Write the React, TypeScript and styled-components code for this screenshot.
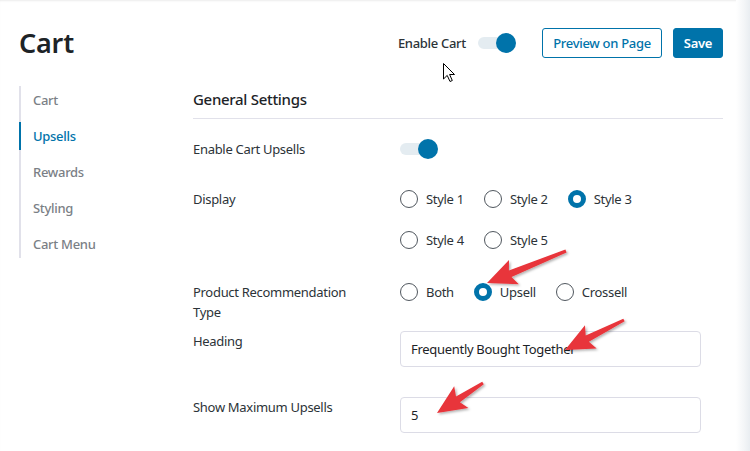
import React from "react";
import styled, { createGlobalStyle } from "styled-components";

const GlobalStyle = createGlobalStyle`
  html, body { margin: 0; padding: 0; background: #ffffff; }
  body { font-family: "Noto Sans", "Open Sans", sans-serif; color: #1d2327; letter-spacing: -0.3px; }
  * { box-sizing: border-box; }
`;

const Page = styled.div`
  position: relative;
  width: 750px;
  height: 451px;
  display: flex;
  overflow: hidden;
  background: #fff;
  box-shadow: inset 0 2px 2px -1px rgba(0, 0, 0, 0.08);
`;

const Content = styled.div`
  flex: 1;
  padding: 28px 13px 0 19px;
  display: flex;
  flex-direction: column;
`;

const EdgeStrip = styled.div`
  width: 14px;
  background: linear-gradient(90deg, #ffffff 0%, #f3f5f7 60%, #e9edf1 100%);
`;

const Header = styled.div`
  display: flex;
  align-items: center;
  justify-content: space-between;
  height: 30px;
`;

const Title = styled.h1`
  margin: 0;
  font-size: 27px;
  font-weight: 600;
  line-height: 30px;
  letter-spacing: -0.2px;
  color: #1d2327;
`;

const Actions = styled.div`
  display: flex;
  align-items: center;
`;

const ActionLabel = styled.span`
  font-size: 13px;
  font-weight: 500;
  color: #2c3338;
  margin-right: 12px;
`;

const Switch = styled.span<{ $gap?: number }>`
  position: relative;
  display: inline-block;
  width: 38px;
  height: 20px;
  margin-right: ${(p) => p.$gap ?? 0}px;
  &::before {
    content: "";
    position: absolute;
    left: 0;
    top: 4px;
    width: 34px;
    height: 12px;
    border-radius: 6px;
    background: #e4ecf1;
  }
  &::after {
    content: "";
    position: absolute;
    right: 0;
    top: 0;
    width: 20px;
    height: 20px;
    border-radius: 50%;
    background: #0073aa;
  }
`;

const Button = styled.button<{ $primary?: boolean }>`
  height: 30px;
  width: ${(p) => (p.$primary ? 50 : 120)}px;
  padding: 0;
  border-radius: 3px;
  border: 1px solid #0073aa;
  background: ${(p) => (p.$primary ? "#0073aa" : "#fff")};
  color: ${(p) => (p.$primary ? "#fff" : "#0073aa")};
  font-family: inherit;
  font-size: 13px;
  letter-spacing: -0.3px;
  font-weight: ${(p) => (p.$primary ? 600 : 500)};
  margin-left: ${(p) => (p.$primary ? 11 : 0)}px;
`;

const Body = styled.div`
  display: grid;
  grid-template-columns: 174px 1fr;
  margin-top: 28px;
`;

const SideNav = styled.nav`
  align-self: start;
  border-left: 2px solid #e1e1ea;
  display: flex;
  flex-direction: column;
  gap: 8px;
`;

const NavItem = styled.div<{ $active?: boolean }>`
  height: 28px;
  display: flex;
  align-items: center;
  padding-left: 12px;
  margin-left: -2px;
  border-left: 2px solid ${(p) => (p.$active ? "#0073aa" : "transparent")};
  font-size: 13px;
  font-weight: 500;
  color: ${(p) => (p.$active ? "#0073aa" : "#7b7f86")};
`;

const Main = styled.div`
  display: flex;
  flex-direction: column;
`;

const SectionTitle = styled.h2`
  margin: 0;
  font-size: 15px;
  font-weight: 500;
  line-height: 26px;
  padding-bottom: 6px;
  border-bottom: 1px solid #e1e1ea;
  color: #1d2327;
`;

const Row = styled.div<{ $top: number }>`
  display: flex;
  align-items: flex-start;
  margin-top: ${(p) => p.$top}px;
`;

const Label = styled.div`
  width: 207px;
  flex: none;
  font-size: 13px;
  line-height: 20px;
  color: #2c3338;
  padding-right: 40px;
`;

const Control = styled.div`
  flex: 1;
  display: flex;
  align-items: center;
  min-height: 20px;
`;

const RadioGroup = styled.div`
  display: flex;
  flex-wrap: wrap;
  row-gap: 21px;
  column-gap: 20px;
  max-width: 260px;
`;

const RadioOption = styled.label`
  display: inline-flex;
  align-items: center;
  height: 20px;
  font-size: 13px;
  color: #2c3338;
`;

const RadioCircle = styled.span<{ $checked?: boolean }>`
  width: 18px;
  height: 18px;
  border-radius: 50%;
  margin-right: 8px;
  background: #fff;
  border: ${(p) => (p.$checked ? "5px solid #0073aa" : "1px solid #50575e")};
`;

const TextInput = styled.div`
  width: 301px;
  height: 36px;
  border: 1px solid #dcdce6;
  border-radius: 4px;
  display: flex;
  align-items: center;
  padding-left: 10px;
  font-size: 13px;
  color: #1d2327;
`;

const Overlay = styled.svg`
  position: absolute;
  left: 0;
  top: 0;
  pointer-events: none;
`;

type Pt = [number, number];

function arrowPoints(tail: Pt, tip: Pt, headLen = 25, headW = 26, shaftW = 7, tailW = 3): string {
  const dx = tip[0] - tail[0];
  const dy = tip[1] - tail[1];
  const len = Math.hypot(dx, dy);
  const ux = dx / len;
  const uy = dy / len;
  const nx = -uy;
  const ny = ux;
  const bx = tip[0] - ux * headLen;
  const by = tip[1] - uy * headLen;
  const wx = bx - ux * 4;
  const wy = by - uy * 4;
  const pts: Pt[] = [
    [tail[0] + (nx * tailW) / 2, tail[1] + (ny * tailW) / 2],
    [bx + (nx * shaftW) / 2, by + (ny * shaftW) / 2],
    [wx + (nx * headW) / 2, wy + (ny * headW) / 2],
    tip,
    [wx - (nx * headW) / 2, wy - (ny * headW) / 2],
    [bx - (nx * shaftW) / 2, by - (ny * shaftW) / 2],
    [tail[0] - (nx * tailW) / 2, tail[1] - (ny * tailW) / 2],
  ];
  return pts.map((p) => `${p[0].toFixed(1)},${p[1].toFixed(1)}`).join(" ");
}

const arrows: Array<[Pt, Pt]> = [
  [[566, 251], [487, 283]],
  [[624, 320], [565, 350]],
  [[483, 383], [437, 413]],
];

export default function App() {
  return (
    <>
      <GlobalStyle />
      <Page>
        <Content>
          <Header>
            <Title>Cart</Title>
            <Actions>
              <ActionLabel>Enable Cart</ActionLabel>
              <Switch $gap={26} />
              <Button>Preview on Page</Button>
              <Button $primary>Save</Button>
            </Actions>
          </Header>
          <Body>
            <SideNav>
              <NavItem>Cart</NavItem>
              <NavItem $active>Upsells</NavItem>
              <NavItem>Rewards</NavItem>
              <NavItem>Styling</NavItem>
              <NavItem>Cart Menu</NavItem>
            </SideNav>
            <Main>
              <SectionTitle>General Settings</SectionTitle>
              <Row $top={20}>
                <Label>Enable Cart Upsells</Label>
                <Control>
                  <Switch />
                </Control>
              </Row>
              <Row $top={30}>
                <Label>Display</Label>
                <Control>
                  <RadioGroup>
                    <RadioOption><RadioCircle />Style 1</RadioOption>
                    <RadioOption><RadioCircle />Style 2</RadioOption>
                    <RadioOption><RadioCircle $checked />Style 3</RadioOption>
                    <RadioOption><RadioCircle />Style 4</RadioOption>
                    <RadioOption><RadioCircle />Style 5</RadioOption>
                  </RadioGroup>
                </Control>
              </Row>
              <Row $top={32}>
                <Label>Product Recommendation Type</Label>
                <Control>
                  <RadioGroup>
                    <RadioOption><RadioCircle />Both</RadioOption>
                    <RadioOption><RadioCircle $checked />Upsell</RadioOption>
                    <RadioOption><RadioCircle />Crossell</RadioOption>
                  </RadioGroup>
                </Control>
              </Row>
              <Row $top={9}>
                <Label>Heading</Label>
                <TextInput>Frequently Bought Together</TextInput>
              </Row>
              <Row $top={30}>
                <Label>Show Maximum Upsells</Label>
                <TextInput>5</TextInput>
              </Row>
            </Main>
          </Body>
        </Content>
        <EdgeStrip />
        <Overlay width={750} height={451} viewBox="0 0 750 451">
          <defs>
            <filter id="arrowShadow" x="-20%" y="-20%" width="140%" height="140%">
              <feDropShadow dx="1.5" dy="1.5" stdDeviation="1.2" floodColor="#000" floodOpacity="0.3" />
            </filter>
          </defs>
          {arrows.map(([t, h], i) => (
            <polygon key={i} points={arrowPoints(t, h)} fill="#e8343a" filter="url(#arrowShadow)" />
          ))}
          <path
            d="M443.5 63.5 L443.5 79 L447.2 75.4 L450 81.5 L452.3 80.5 L449.6 74.5 L454.5 74.5 Z"
            fill="#fff"
            stroke="#000"
            strokeWidth="1"
            strokeLinejoin="round"
          />
        </Overlay>
      </Page>
    </>
  );
}
